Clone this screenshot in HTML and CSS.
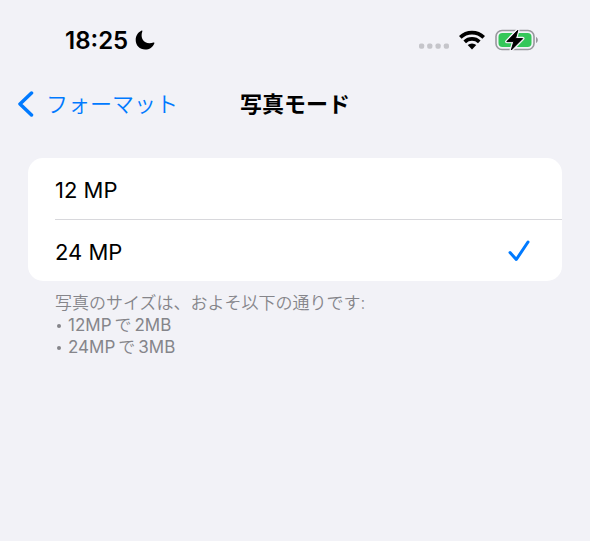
FILE: index.html
```html
<!DOCTYPE html>
<html lang="ja">
<head>
<meta charset="utf-8">
<meta name="viewport" content="width=device-width, initial-scale=1">
<title>写真モード</title>
<link rel="stylesheet" href="styles.css">
</head>
<body>
<div class="status">
  <div class="status-left">
    <time class="clock">18:25</time>
    <svg class="moon" width="20" height="20" viewBox="0 0 20 20" aria-hidden="true"><path d="M6.4.7C7 .4 7.6.8 7.3 1.5 5 7.700 8.600 13.200 14.500 13.200c1.500 0 2.700-.2 3.900-.7.700-.3 1.200.2.900.9C17.900 17.200 14.300 19.500 10.200 19.500 4.700 19.500.7 15.500.7 10 .7 5.900 2.800 2.300 6.400.7z"/></svg>
  </div>
  <div class="status-right">
    <svg width="30" height="6" viewBox="0 0 30 6" class="dots" aria-hidden="true"><rect x="0" y="0.500" width="5.200" height="5.200" rx="1.800"/><rect x="8.200" y="0.500" width="5.200" height="5.200" rx="1.800"/><rect x="16.500" y="0.500" width="5.200" height="5.200" rx="1.800"/><rect x="24.800" y="0.500" width="5.200" height="5.200" rx="1.800"/></svg>
    <svg width="26" height="20" viewBox="0 0 26 20" aria-hidden="true"><g fill="none" stroke="#000" stroke-width="3.700"><path d="M1.300 7.400a16.700 16.700 0 0 1 23.400 0"/><path d="M5.700 11.900a10.500 10.500 0 0 1 14.600 0"/></g><path d="M8.700 15.100a6.300 6.300 0 0 1 8.600 0L13 19.500z"/></svg>
    <svg width="44" height="24" viewBox="0 0 44 24" aria-hidden="true"><rect x="1" y="2.500" width="38" height="19" rx="6" fill="none" stroke="#98989d" stroke-width="1.600"/><path d="M41 9c2.400.8 2.400 5.200 0 6z" fill="#98989d"/><rect x="3.500" y="5" width="33" height="14" rx="4" fill="#34c759"/><path d="M22.800 2.300 11.800 13.600h7L16.300 22 27.700 10.600h-7.200z" stroke="#f2f2f7" stroke-width="3.500" stroke-linejoin="round"/><path d="M22.800 2.300 11.800 13.600h7L16.300 22 27.700 10.600h-7.200z" stroke="#000" stroke-linejoin="round"/></svg>
  </div>
</div>
<header class="nav">
  <a class="back" href="#"><svg width="16" height="26" viewBox="0 0 16 26" aria-hidden="true"><path d="M13.500 2 2 13l11.500 11" fill="none" stroke="#007aff" stroke-width="3.500" stroke-linecap="round" stroke-linejoin="round"/></svg><span class="nav-text">フォーマット</span></a>
  <h1 class="nav-text">写真モード</h1>
</header>
<main>
  <div class="card" role="radiogroup" aria-label="写真モード">
    <label class="row"><input type="radio" name="mode"><span class="label">12 MP</span></label>
    <label class="row"><input type="radio" name="mode" checked><span class="label">24 MP</span></label>
  </div>
  <div class="note">
    <p>写真のサイズは、およそ以下の通りです:</p>
    <ul>
      <li>12MP<span class="kana">で</span>2MB</li>
      <li>24MP<span class="kana">で</span>3MB</li>
    </ul>
  </div>
</main>
</body>
</html>
```
FILE: styles.css
```css
* {
  box-sizing: border-box;
}

body {
  margin: 0;
  min-height: 100vh;
  background: #f2f2f7;
  color: #000;
  font-family: Inter, "Noto Sans CJK JP", sans-serif;
  font-size: 22px;
}

svg {
  display: block;
  flex: none;
}

.status {
  display: flex;
  justify-content: space-between;
  align-items: center;
  height: 80px;
  padding: 0 51px 0 65px;
}

.status-left,
.status-right {
  display: flex;
  align-items: center;
}

.status-left {
  gap: 7px;
}

.status-right {
  gap: 10px;
}

.clock {
  padding-top: 2px;
  font-size: 24px;
  font-weight: 600;
  line-height: 28px;
}

.dots {
  fill: #c5c5ca;
  margin-top: 12px;
}

.nav {
  display: grid;
  grid-template-columns: 1fr auto 1fr;
  align-items: center;
  height: 48px;
  padding: 0 18px;
}

.back {
  display: flex;
  align-items: center;
  gap: 12px;
  color: #007aff;
  text-decoration: none;
  white-space: nowrap;
}

.nav-text {
  margin: 0;
  font-size: 22px;
  line-height: 28px;
}

.back .nav-text {
  font-weight: 350;
}

main {
  padding: 30px 28px 0;
}

.card {
  background: #fff;
  border-radius: 15px;
}

.row {
  display: flex;
  flex-direction: row-reverse;
  align-items: center;
  height: 61px;
  margin-left: 27px;
  padding-right: 32px;
}

.row + .row {
  height: 62px;
  border-top: 1px solid #d8d8dc;
}

.label {
  flex: 1;
  padding-top: 3px;
}

.row input {
  appearance: none;
  width: 22px;
  height: 22px;
  margin: 0;
}

.row input:checked {
  background: url("data:image/svg+xml,%3Csvg xmlns='http://www.w3.org/2000/svg' viewBox='0 0 22 22'%3E%3Cpath d='M2 12.500 8.300 19.500 20 2' fill='none' stroke='%23007aff' stroke-width='3' stroke-linecap='round' stroke-linejoin='round'/%3E%3C/svg%3E") center / contain no-repeat;
}

.note {
  padding: 11px 27px 0;
  color: #85858a;
  font-size: 17px;
  line-height: 22px;
}

.note p,
.note ul {
  margin: 0;
  padding: 0;
}

.note p,
.kana {
  font-weight: 350;
}

.note ul {
  list-style: none;
}

.note li {
  display: flex;
}

.note li::before {
  content: "";
  width: 4px;
  height: 4px;
  margin: 10px 7px 0 2px;
  border-radius: 50%;
  background: currentColor;
}

.kana {
  padding: 0 3px;
}
```
